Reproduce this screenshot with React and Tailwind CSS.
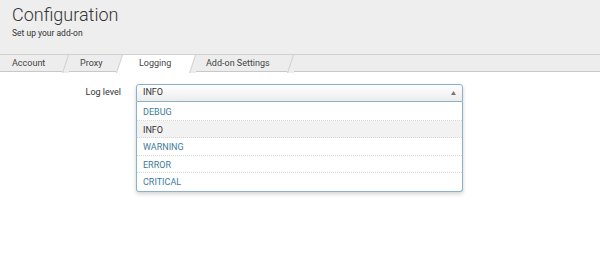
import React from "react";

const Sep = ({ dir, left, right }) => {
  // dir "\" : top at x=0, bottom at x=w ; "/" : bottom at 0, top at w
  const w = 7;
  const h = 18;
  const top = dir === "\\" ? 0.5 : w - 0.5;
  const bot = dir === "\\" ? w - 0.5 : 0.5;
  return (
    <svg width={w} height={h} className="shrink-0 block">
      <polygon points={`0,0 ${top},0 ${bot},${h} 0,${h}`} fill={left} />
      <polygon points={`${top},0 ${w},0 ${w},${h} ${bot},${h}`} fill={right} />
      <line x1={top} y1="0" x2={bot} y2={h} stroke="#c8c8c8" strokeWidth="0.8" />
    </svg>
  );
};

const levels = ["DEBUG", "INFO", "WARNING", "ERROR", "CRITICAL"];

export default function App() {
  const gray = "#ededed";
  return (
    <div
      className="w-[600px] h-[258px] bg-white overflow-hidden text-[#333]"
      style={{ fontFamily: "Roboto, 'Liberation Sans', sans-serif" }}
    >
      <div className="bg-[#eeeeee] h-[54px] pl-3 pt-[3px]">
        <h1 className="text-[18px] font-light leading-[24px] text-[#333]">
          Configuration
        </h1>
        <p className="text-[8.5px] leading-[14px] -mt-[1px] text-[#333]">
          Set up your add-on
        </p>
      </div>
      <div className="flex h-[18px] border-t border-[#d0d0d0] bg-[#ededed] text-[9px] leading-[17px] text-[#444]">
        <div className="w-[62px] pl-3 border-b border-[#c8c8c8]">Account</div>
        <Sep dir="\\" left={gray} right={gray} />
        <div className="w-[47px] pl-[11px] border-b border-[#c8c8c8]">Proxy</div>
        <Sep dir="/" left={gray} right="#ffffff" />
        <div className="w-[66px] pl-[16px] bg-white">Logging</div>
        <Sep dir="\\" left="#ffffff" right={gray} />
        <div className="w-[91px] pl-[10px] border-b border-[#c8c8c8]">Add-on Settings</div>
        <Sep dir="\\" left={gray} right={gray} />
        <div className="flex-1 border-b border-[#c8c8c8]" />
      </div>
      <div className="flex pt-[12px]">
        <div className="w-[122px] text-right text-[9px] leading-[17px] pr-[1px]">
          Log level
        </div>
        <div className="ml-[14px] w-[327px] shadow-[0_2px_4px_rgba(0,0,0,0.18)] rounded-[3px]">
          <div className="h-[18px] border border-[#8cb2c9] rounded-t-[3px] bg-gradient-to-b from-white to-[#ececec] flex items-center justify-between pl-[6px] pr-[6px] text-[9px]">
            <span>INFO</span>
            <svg width="5" height="4" className="block">
              <polygon points="0,4 2.5,0 5,4" fill="#777" />
            </svg>
          </div>
          <ul className="border border-t-0 border-[#8cb2c9] rounded-b-[3px] bg-white pt-[1px]">
            {levels.map((l, i) => (
              <li
                key={l}
                className={`h-[17.6px] leading-[18px] pl-[6px] text-[9px] ${
                  i < levels.length - 1 ? "border-b border-dotted border-[#d6d6d6]" : ""
                } ${l === "INFO" ? "bg-[#f2f2f2] text-[#333]" : "text-[#3e7c9b]"}`}
              >
                {l}
              </li>
            ))}
          </ul>
        </div>
      </div>
    </div>
  );
}
